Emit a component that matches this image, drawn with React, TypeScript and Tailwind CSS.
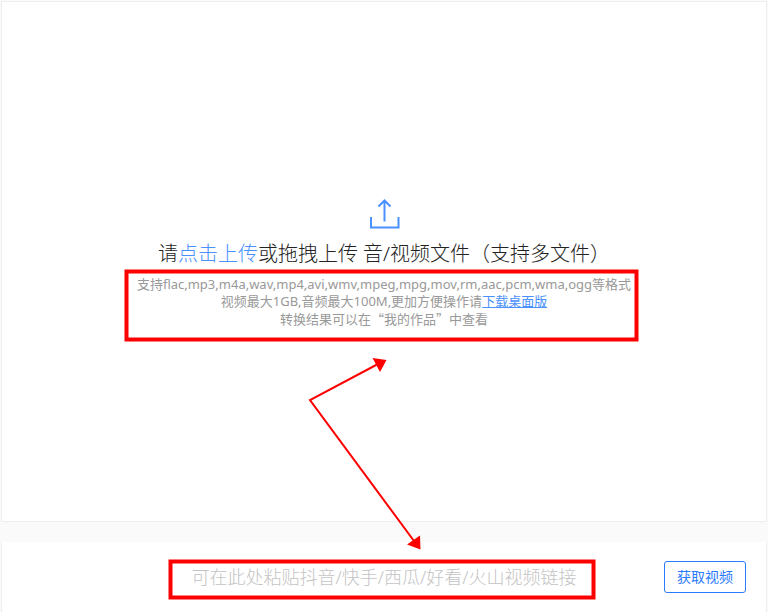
function UploadIcon() {
  return (
    <svg className="block" width="32" height="32" viewBox="0 0 32 32" fill="none" stroke="#4a90ff" strokeWidth="2" aria-hidden="true">
      <path d="M3 20v10.500h27.500v-10.500" />
      <path d="M16.500 24.500V3.500M10.500 9.500l6-6 6 6" />
    </svg>
  );
}

function Annotations() {
  return (
    <svg
      className="pointer-events-none absolute top-0 left-1/2 -translate-x-1/2"
      width="768"
      height="612"
      viewBox="0 0 768 612"
      fill="none"
      stroke="#ff0000"
      aria-hidden="true"
    >
      <rect x="126.5" y="271.5" width="510" height="68" strokeWidth="4" />
      <rect x="170.5" y="561.5" width="423" height="36" strokeWidth="4" />
      <path d="M378 364L310 400L414 541" strokeWidth="2" />
      <path d="M386.500 360L372.500 358L380 372ZM420.500 549.500L407 544.500L420 535.500Z" fill="#ff0000" stroke="none" />
    </svg>
  );
}

function UploadPanel() {
  return (
    <section className="flex h-[521px] flex-col items-center border border-[#eeeeee] bg-white pt-[195px]">
      <UploadIcon />
      <h1 className="mt-[11px] text-xl leading-7 font-light text-[#222222]">
        请
        <button type="button" className="cursor-pointer text-[#4a90ff]">
          点击上传
        </button>
        或拖拽上传 音/视频文件（支持多文件）
      </h1>
      <p className="mt-2 text-center text-[13px] leading-[17px] text-[#999999]">
        支持flac,mp3,m4a,wav,mp4,avi,wmv,mpeg,mpg,mov,rm,aac,pcm,wma,ogg等格式
        <br />
        视频最大1GB,音频最大100M,更加方便操作请
        <a href="#desktop" className="text-[#4a90ff] underline">
          下载桌面版
        </a>
        <br />
        <span className="font-['Noto_Sans_CJK_SC',sans-serif]">转换结果可以在“我的作品”中查看</span>
      </p>
    </section>
  );
}

function LinkPanel() {
  return (
    <form className="flex flex-1 items-start border-x border-[#eeeeee] bg-white pt-[19px] pr-5 pl-[102px]">
      <input
        type="text"
        aria-label="视频链接"
        placeholder="可在此处粘贴抖音/快手/西瓜/好看/火山视频链接"
        className="h-8 min-w-0 flex-1 bg-transparent text-center text-lg font-light text-[#333333] outline-none placeholder:text-[#c4c4c4]"
      />
      <button type="button" className="h-8 w-[82px] cursor-pointer rounded-[3px] border border-[#2b7bff] text-sm text-[#2b7bff]">
        获取视频
      </button>
    </form>
  );
}

export default function App() {
  return (
    <main lang="zh-CN" className="relative flex min-h-screen flex-col gap-5 overflow-hidden bg-[#fafafa] px-px pt-px font-['Noto_Sans','Noto_Sans_CJK_SC',sans-serif]">
      <UploadPanel />
      <LinkPanel />
      <Annotations />
    </main>
  );
}
